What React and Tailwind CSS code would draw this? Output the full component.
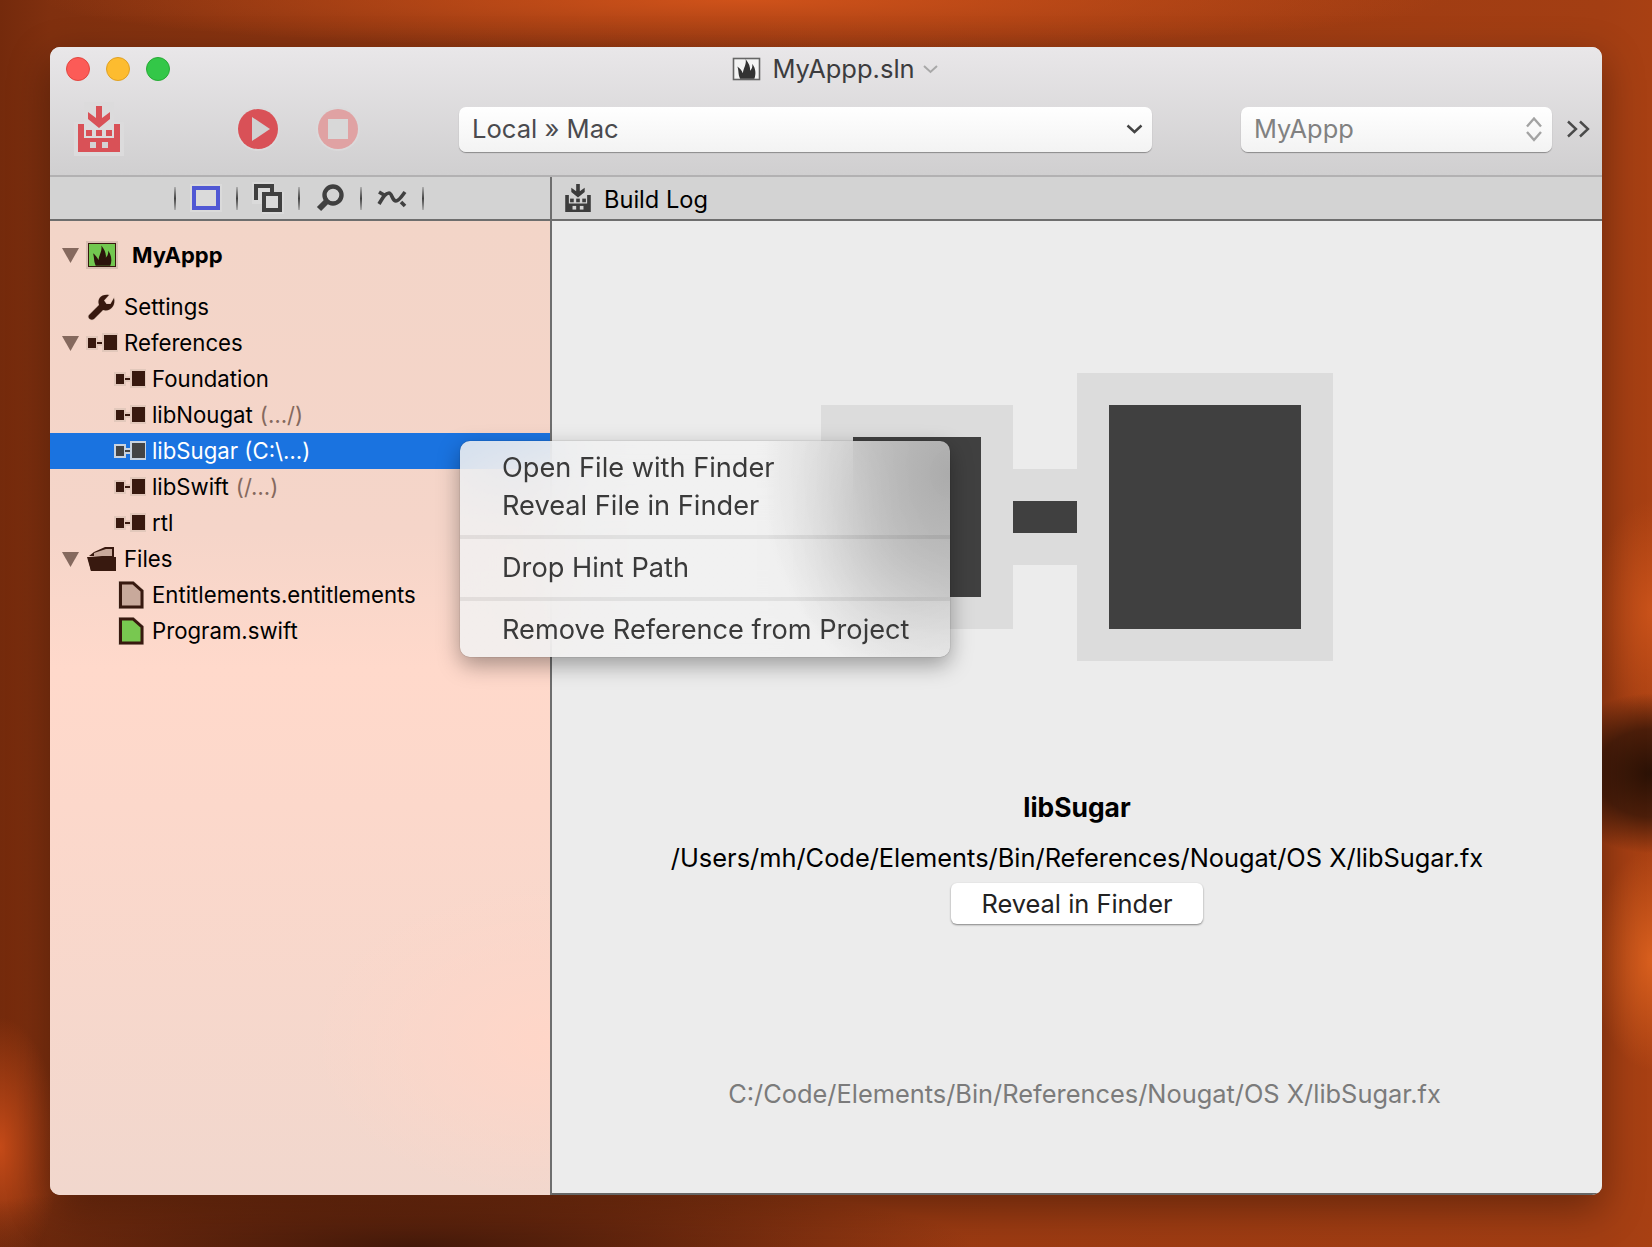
import React from "react";

const DARK = "#38190f";

function Ref({ light }) {
  const c = light ? "#444" : DARK;
  const halo = light ? "#c9d3df" : "#e2c8bb";
  return (
    <svg width="32" height="20" viewBox="0 0 32 20" className="shrink-0">
      <rect x="0" y="3" width="12" height="14" fill={halo} />
      <rect x="16" y="0" width="16" height="19" fill={halo} />
      <rect x="12" y="7" width="4" height="6" fill={halo} />
      <rect x="2" y="5" width="8" height="10" fill={c} />
      <rect x="18" y="2" width="13" height="15" fill={c} />
      <rect x="11" y="9" width="5" height="2" fill={c} />
    </svg>
  );
}

function Tri() {
  return (
    <svg width="17" height="15" viewBox="0 0 17 15" className="shrink-0">
      <path d="M0 0H17L8.5 15Z" fill="#85695e" />
    </svg>
  );
}

function Row({ indent, tri, icon, children, selected, extra }) {
  return (
    <div className={`flex items-center h-9 ${selected ? "bg-[#1a73e0] text-white" : "text-black"}`}>
      <div className="w-[12px] shrink-0" />
      <div className="w-[18px] shrink-0 flex items-center">{tri && <Tri />}</div>
      <div className={`${indent ? "w-[28px]" : "w-0"} shrink-0`} />
      <div className="w-[44px] shrink-0 flex items-center pl-[6px]">{icon}</div>
      <span>{children}</span>
      {extra && <span className="ml-[7px] text-[#85695e]">{extra}</span>}
    </div>
  );
}

function Page({ color }) {
  return (
    <svg width="30" height="28" viewBox="0 0 30 28" className="shrink-0 ml-[3px]">
      <path d="M3 0H17L27 9V28H1V0Z" fill="#e2c8bb" />
      <path d="M3.5 2H16L25 10V26H3.5Z" fill={color} stroke={DARK} strokeWidth="3" />
    </svg>
  );
}

function Factory({ color, bg, w = 42, h = 46, halo }) {
  return (
    <svg width={halo ? 50 : w} height={halo ? 54 : h} viewBox={halo ? "-4 -4 50 54" : "0 0 42 46"} className="shrink-0">
      {halo && <path d="M6 -4H36V16H46V50H-4V16H6Z" fill="#dcdbdc" />}
      <path d="M18 0H24V12L32 6V13L21 22L10 13V6L18 12Z" fill={color} />
      <path d="M0 18H6V32H36V18H42V46H0Z" fill={color} />
      <rect x="8" y="24" width="6" height="6" fill={color} />
      <rect x="18" y="24" width="6" height="6" fill={color} />
      <rect x="28" y="24" width="6" height="6" fill={color} />
      <rect x="12" y="36" width="6" height="6" fill={bg} />
      <rect x="24" y="36" width="6" height="6" fill={bg} />
    </svg>
  );
}

function Flame({ color }) {
  return (
    <path
      d="M6 22C4 18 5 15 3.5 11C6 12.5 7.5 15 8.5 17C9 12 12 9 11 4C14 8 15.5 11 15 15C16.5 13 17.5 12 17 8.5C20.5 13 20.5 18 19 22Z"
      fill={color}
    />
  );
}

function Sep() {
  return <div className="w-[2px] h-[23px] shrink-0 bg-gradient-to-b from-[#b0b0b0] via-[#444] to-[#b0b0b0]" />;
}

function Cell({ children }) {
  return <div className="w-[60px] shrink-0 flex items-center justify-center">{children}</div>;
}

export default function App() {
  return (
    <div
      className="relative w-[1652px] h-[1247px] overflow-hidden pt-[47px] pl-[50px] bg-[radial-gradient(ellipse_100px_80px_at_100%_62%,#2a1105_0%,#4c1e0a_55%,transparent_100%),radial-gradient(ellipse_60px_110px_at_100%_49%,#c9521a_0%,transparent_100%),radial-gradient(ellipse_60px_110px_at_100%_77%,#d85f1e_0%,transparent_100%),radial-gradient(ellipse_560px_70px_at_25%_100%,#43190a_0%,transparent_100%),radial-gradient(ellipse_60px_130px_at_0%_92%,#c44a18_0%,transparent_100%),radial-gradient(ellipse_700px_50px_at_45%_0%,#cf521a_0%,transparent_100%),linear-gradient(90deg,#742a0c_0%,#80300f_3%,#9a3a12_50%,#a33e13_97%,#a84013_100%)]"
      style={{ fontFamily: 'Inter, "Noto Sans", sans-serif' }}
    >
      <div className="relative w-[1552px] h-[1148px] rounded-t-[10px] rounded-b-[10px] overflow-hidden flex flex-col shadow-[0_14px_40px_rgba(0,0,0,0.35)] bg-[#ececec]">
        {/* title + toolbar */}
        <div className="h-[130px] shrink-0 flex flex-col bg-gradient-to-b from-[#e9e7e9] to-[#d0cfd0] border-b-2 border-[#b2b1b2]">
          <div className="h-[44px] shrink-0 relative flex items-center justify-center">
            <div className="absolute left-[16px] top-[10px] flex gap-4">
              <div className="w-6 h-6 rounded-full bg-[#fc5b57] border border-[#e2463f]" />
              <div className="w-6 h-6 rounded-full bg-[#fdbc2f] border border-[#dfa023]" />
              <div className="w-6 h-6 rounded-full bg-[#33c748] border border-[#27aa35]" />
            </div>
            <div className="ml-[18px] flex items-center text-[25.5px] leading-none text-[#3c3c3e]">
              <svg width="29" height="24" viewBox="0 0 29 24" className="mr-[11px] shrink-0">
                <rect x="1.5" y="1.5" width="26" height="21" fill="#f4f4f4" stroke="#666" strokeWidth="1.6" />
                <g transform="translate(1.5 -2.5) scale(1.1)"><Flame color="#333" /></g>
              </svg>
              <span>MyAppp.sln</span>
              <svg width="15" height="9" viewBox="0 0 15 9" className="ml-[8px] shrink-0">
                <path d="M1 1L7.5 7L14 1" fill="none" stroke="#a8a8a8" strokeWidth="2" />
              </svg>
            </div>
          </div>
          <div className="flex items-center h-[84px] pb-[8px]">
            <div className="ml-[24px] flex items-center">
              <Factory color="#d95157" bg="#d4d3d4" halo />
            </div>
            <svg width="44" height="44" viewBox="0 0 44 44" className="ml-[112px] shrink-0">
              <circle cx="22" cy="22" r="22" fill="#dbdadb" />
              <circle cx="22" cy="22" r="20" fill="#d95157" />
              <path d="M16 10L34 22L16 34Z" fill="#d1d1d1" />
            </svg>
            <svg width="44" height="44" viewBox="0 0 44 44" className="ml-[36px] shrink-0">
              <circle cx="22" cy="22" r="22" fill="#dbdadb" />
              <circle cx="22" cy="22" r="20" fill="#e0a2a3" />
              <rect x="12" y="12" width="20" height="20" fill="#d8d8d8" />
            </svg>
            <div className="ml-[99px] w-[693px] h-[45px] rounded-[7px] bg-gradient-to-b from-white to-[#f3f3f3] shadow-[0_1px_1px_rgba(0,0,0,0.35)] flex items-center justify-between pl-[13px] pr-[9px] text-[25.6px] text-[#4a4a4e]">
              <span className="pt-[1px]">Local » Mac</span>
              <svg width="17" height="10" viewBox="0 0 17 10">
                <path d="M1.5 1.5L8.5 8L15.5 1.5" fill="none" stroke="#444" strokeWidth="2.4" />
              </svg>
            </div>
            <div className="ml-[89px] w-[311px] h-[45px] rounded-[7px] bg-gradient-to-b from-white to-[#f3f3f3] shadow-[0_1px_1px_rgba(0,0,0,0.35)] flex items-center justify-between pl-[13px] pr-[9px] text-[25.4px] text-[#818181]">
              <span className="pt-[1px]">MyAppp</span>
              <svg width="18" height="26" viewBox="0 0 18 26">
                <path d="M2 10.5L9 2.5L16 10.5M2 16L9 24L16 16" fill="none" stroke="#a3a3a3" strokeWidth="2.4" />
              </svg>
            </div>
            <svg width="24" height="18" viewBox="0 0 24 18" className="ml-[14px] shrink-0">
              <path d="M2 1.5L10 9L2 16.5M14 1.5L22 9L14 16.5" fill="none" stroke="#4a4a4a" strokeWidth="2.4" />
            </svg>
          </div>
        </div>

        {/* tab strip */}
        <div className="h-[44px] shrink-0 flex bg-[#d3d3d3] border-b-2 border-[#6e6e6e]">
          <div className="w-[500px] shrink-0 flex items-center pl-[124px]">
            <Sep />
            <Cell>
              <svg width="32" height="28" viewBox="0 0 32 28">
                <rect x="0" y="0" width="32" height="28" fill="#dadada" />
                <rect x="4" y="4" width="24" height="20" fill="none" stroke="#5058d4" strokeWidth="4" />
              </svg>
            </Cell>
            <Sep />
            <Cell>
              <svg width="32" height="32" viewBox="0 0 32 32">
                <path d="M0 0H22V10H32V32H10V22H0Z" fill="#dadada" />
                <path d="M4 18V4H20V10M12 12H28V28H12Z" fill="none" stroke="#404040" strokeWidth="4" />
              </svg>
            </Cell>
            <Sep />
            <Cell>
              <svg width="28" height="28" viewBox="0 0 28 28">
                <circle cx="17" cy="11" r="8.5" fill="none" stroke="#404040" strokeWidth="4.4" />
                <path d="M11 17L3 25" stroke="#404040" strokeWidth="6" />
              </svg>
            </Cell>
            <Sep />
            <Cell>
              <svg width="30" height="20" viewBox="0 0 30 20">
                <path d="M2 4L7 7M2 16C5 11 8 5 12 5C15 5 15 13 19 13C22 13 25 8 28 4M24 14L28 18" fill="none" stroke="#404040" strokeWidth="3.6" />
              </svg>
            </Cell>
            <Sep />
          </div>
          <div className="w-[2px] shrink-0 bg-[#6e6e6e]" />
          <div className="flex items-center pl-[13px] text-[23.6px] text-black gap-[13px]">
            <Factory color="#3c3c3c" bg="#d3d3d3" w={26} h={28} />
            <span className="pt-[4px]">Build Log</span>
          </div>
        </div>

        <div className="flex-1 flex min-h-0">
          {/* sidebar */}
          <div className="w-[500px] shrink-0 bg-[radial-gradient(ellipse_240px_160px_at_100%_84%,#ffd6c8_0%,transparent_100%),linear-gradient(180deg,#f3d5c8_0%,#f5d5c9_32%,#ffd9cb_46%,#fcd8cb_60%,#f1d7cd_100%)] pt-[16px] text-[22.2px]">
            <div className="flex items-center h-[36px] mb-[16px]">
              <div className="w-[12px] shrink-0" />
              <Tri />
              <svg width="32" height="28" viewBox="0 0 32 28" className="ml-[7px] shrink-0">
                <rect x="0" y="0" width="32" height="28" fill="#d9bfb2" />
                <rect x="2.5" y="2.5" width="27" height="23" fill="#72c850" stroke={DARK} strokeWidth="1" />
                <g transform="translate(3 0) scale(1.12)"><Flame color="#2b130b" /></g>
              </svg>
              <span className="ml-[14px] font-bold text-[22px] text-black">MyAppp</span>
            </div>
            <Row icon={
              <svg width="30" height="28" viewBox="0 0 30 28">
                <path d="M3 22L13 12C11 6 15 1 23 2L18 7.5L20.5 11L24.5 11L28 5C30 13 24 19 17 17L8 26C5 28 1 25 3 22Z" fill={DARK} stroke="#e2c8bb" strokeWidth="1.4" paintOrder="stroke" />
              </svg>
            }>Settings</Row>
            <Row tri icon={<Ref />}>References</Row>
            <Row indent icon={<Ref />}>Foundation</Row>
            <Row indent icon={<Ref />} extra="(…/)">libNougat</Row>
            <Row indent selected icon={<Ref light />}>libSugar (C:\…)</Row>
            <Row indent icon={<Ref />} extra="(/…)">libSwift</Row>
            <Row indent icon={<Ref />}>rtl</Row>
            <Row tri icon={
              <svg width="31" height="26" viewBox="0 0 31 26">
                <path d="M3 10L8 6L19 1H28V12H2L5 25H29V12" fill={DARK} />
                <path d="M8 10V7L20 3H26V10Z" fill="#c8a99b" />
                <path d="M1 11H30V25H5Z" fill={DARK} />
              </svg>
            }>Files</Row>
            <Row indent icon={<Page color="#c8a99b" />}>Entitlements.entitlements</Row>
            <Row indent icon={<Page color="#78c850" />}>Program.swift</Row>
          </div>
          <div className="w-[2px] shrink-0 bg-[#6e6e6e]" />

          {/* detail */}
          <div className="flex-1 min-w-0 flex flex-col">
            <div className="flex-1 min-h-0 flex flex-col items-center bg-[#ececec] pt-[152px] text-[25.4px] text-black">
              <svg width="512" height="288" viewBox="0 0 512 288" className="shrink-0">
                <rect x="0" y="32" width="192" height="224" fill="#dcdcdc" />
                <rect x="32" y="64" width="128" height="160" fill="#404040" />
                <rect x="192" y="96" width="64" height="96" fill="#dcdcdc" />
                <rect x="192" y="128" width="64" height="32" fill="#404040" />
                <rect x="256" y="0" width="256" height="288" fill="#dcdcdc" />
                <rect x="288" y="32" width="192" height="224" fill="#404040" />
              </svg>
              <div className="mt-[130px] h-8 leading-8 font-bold text-[26.4px]">libSugar</div>
              <div className="mt-[19px] h-8 leading-8">/Users/mh/Code/Elements/Bin/References/Nougat/OS X/libSugar.fx</div>
              <div className="mt-[9px] w-[252px] h-[41px] pt-[1px] rounded-[6px] bg-white shadow-[0_1px_2px_rgba(0,0,0,0.45)] flex items-center justify-center text-[#222]">Reveal in Finder</div>
              <div className="mt-[154px] ml-[15px] h-8 leading-8 text-[#7b7b7b]">C:/Code/Elements/Bin/References/Nougat/OS X/libSugar.fx</div>
            </div>
            <div className="h-[2px] shrink-0 bg-[#666]" />
          </div>
        </div>

        {/* context menu */}
        <div className="absolute left-[410px] top-[394px] w-[490px] h-[216px] rounded-[10px] overflow-hidden shadow-[0_0_1px_rgba(0,0,0,0.6),0_8px_22px_rgba(0,0,0,0.35)] bg-[radial-gradient(ellipse_190px_230px_at_100%_15%,rgba(110,110,110,0.42),transparent),linear-gradient(rgba(241,241,241,0.86),rgba(241,241,241,0.86))] backdrop-blur-[36px] text-[27.2px] text-[#3a3a3a] flex flex-col">
          <div className="h-[94px] shrink-0 pt-[8px] pl-[42px] leading-[38px]">
            <div>Open File with Finder</div>
            <div>Reveal File in Finder</div>
          </div>
          <div className="h-[4px] shrink-0 bg-[rgba(0,0,0,0.07)]" />
          <div className="h-[58px] shrink-0 pl-[42px] flex items-center">Drop Hint Path</div>
          <div className="h-[4px] shrink-0 bg-[rgba(0,0,0,0.07)]" />
          <div className="flex-1 pl-[42px] pt-[2px] flex items-center">Remove Reference from Project</div>
        </div>
      </div>
    </div>
  );
}
